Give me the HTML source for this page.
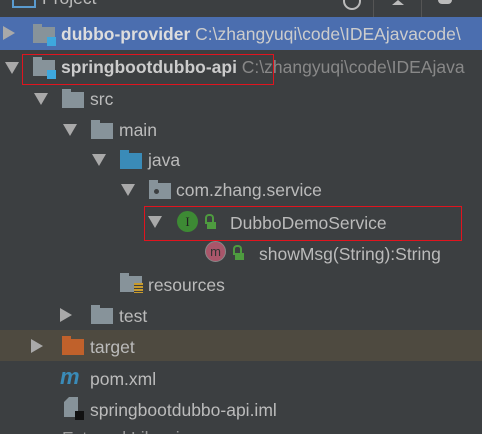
<!DOCTYPE html>
<html style="overflow:hidden;height:434px"><head><style>
body{margin:0;width:482px;height:434px;background:#3c3f41;overflow:hidden;font-family:"Liberation Sans",sans-serif;font-size:17.5px;color:#bbbbbb;position:relative}
.a{position:absolute}
.row{position:absolute;left:0;width:482px;height:31px}
.t{position:absolute;white-space:nowrap;line-height:20px}
.tri-d{position:absolute;width:0;height:0;border-left:7px solid transparent;border-right:7px solid transparent;border-top:12px solid #a9a9a9}
.tri-r{position:absolute;width:0;height:0;border-top:7px solid transparent;border-bottom:7px solid transparent;border-left:12px solid #a9a9a9}
.fold{position:absolute;width:22px;height:16px;background:#87939a}
.fold:before{content:"";position:absolute;left:0;top:-3px;width:9px;height:4px;background:inherit}
</style></head><body>
<div class="a" style="left:0;top:0;width:482px;height:17px;background:#3c3f41;border-bottom:1px solid #323232"></div>
<div class="a" style="left:12px;top:-6px;width:20px;height:10px;border:2px solid #5a9bcf"></div>
<div class="t" style="left:42px;top:-12px;color:#bbb">Project</div>
<div class="a" style="left:343px;top:-8px;width:14px;height:14px;border:2px solid #bbb;border-radius:50%"></div>
<div class="a" style="left:373px;top:0;width:1px;height:17px;background:#555"></div>
<div class="a" style="left:392px;top:0;width:0;height:0;border-left:6px solid transparent;border-right:6px solid transparent;border-bottom:5px solid #bbb"></div>
<div class="a" style="left:421px;top:0;width:1px;height:17px;background:#555"></div>
<div class="a" style="left:438px;top:-6px;width:14px;height:10px;background:#bbb;border-radius:4px"></div>

<div class="row" style="top:17px;height:33px;background:#4b6eaf"></div>
<div class="tri-r" style="left:3px;top:26px"></div>
<div class="fold" style="left:33px;top:27px"></div><div class="a" style="left:47px;top:37px;width:9px;height:9px;background:#3ea8de"></div>
<div class="t" style="left:61px;top:24px;color:#ddd;font-weight:bold">dubbo-provider <span style="font-weight:normal;color:#ccc">C:\zhangyuqi\code\IDEAjavacode\</span></div>

<div class="tri-d" style="left:5px;top:62px"></div>
<div class="fold" style="left:33px;top:60px"></div><div class="a" style="left:47px;top:70px;width:9px;height:9px;background:#3ea8de"></div>
<div class="t" style="left:61px;top:57px;color:#ccc;font-weight:bold">springbootdubbo-api <span style="font-weight:normal;color:#888">C:\zhangyuqi\code\IDEAjava</span></div>
<div class="a" style="left:22px;top:54px;width:250px;height:29px;border:1.5px solid #e0141e"></div>

<div class="tri-d" style="left:34px;top:93px"></div>
<div class="fold" style="left:62px;top:92px"></div>
<div class="t" style="left:90px;top:89px">src</div>

<div class="tri-d" style="left:63px;top:124px"></div>
<div class="fold" style="left:91px;top:123px"></div>
<div class="t" style="left:119px;top:120px">main</div>

<div class="tri-d" style="left:92px;top:154px"></div>
<div class="fold" style="left:120px;top:153px;background:#3a8bb8"></div>
<div class="t" style="left:148px;top:150px">java</div>

<div class="tri-d" style="left:121px;top:184px"></div>
<div class="fold" style="left:149px;top:183px"></div><div class="a" style="left:154px;top:189px;width:5px;height:5px;border-radius:50%;background:#3c3f41"></div>
<div class="t" style="left:176px;top:180px">com.zhang.service</div>

<div class="tri-d" style="left:148px;top:216px"></div>
<div class="a" style="left:177px;top:211px;width:21px;height:21px;border-radius:50%;background:#3d8a34;color:#222;font-size:13px;text-align:center;line-height:21px;font-family:'Liberation Serif',serif">I</div>
<div class="a" style="left:207px;top:222px;width:9px;height:7px;background:#4e9b3f"></div><div class="a" style="left:205px;top:214px;width:5px;height:8px;border:2px solid #4e9b3f;border-bottom:none;border-radius:4px 4px 0 0"></div>
<div class="t" style="left:230px;top:213px">DubboDemoService</div>
<div class="a" style="left:144px;top:206px;width:316px;height:33px;border:1.5px solid #e0141e"></div>

<div class="a" style="left:205px;top:241px;width:21px;height:21px;border-radius:50%;background:#a9566a;border:1px solid #888;color:#333;font-size:13px;text-align:center;line-height:19px;box-sizing:border-box">m</div>
<div class="a" style="left:235px;top:253px;width:9px;height:7px;background:#4e9b3f"></div><div class="a" style="left:233px;top:245px;width:5px;height:8px;border:2px solid #4e9b3f;border-bottom:none;border-radius:4px 4px 0 0"></div>
<div class="t" style="left:259px;top:244px">showMsg(String):String</div>

<div class="fold" style="left:120px;top:276px"></div>
<div class="a" style="left:134px;top:283px;width:9px;height:10px;background:repeating-linear-gradient(#c89b2d 0 2px,#3c3f41 2px 3px)"></div>
<div class="t" style="left:148px;top:275px">resources</div>

<div class="tri-r" style="left:60px;top:308px"></div>
<div class="fold" style="left:91px;top:308px"></div>
<div class="t" style="left:119px;top:306px">test</div>

<div class="row" style="top:330px;background:#4e4a40"></div>
<div class="tri-r" style="left:31px;top:339px"></div>
<div class="fold" style="left:62px;top:339px;background:#c0612b"></div>
<div class="t" style="left:90px;top:337px">target</div>

<div class="t" style="left:60px;top:367px;color:#3a8bb8;font-weight:bold;font-style:italic;font-size:22px">m</div>
<div class="t" style="left:90px;top:369px">pom.xml</div>

<div class="a" style="left:64px;top:397px;width:14px;height:20px;background:#87939a;clip-path:polygon(5px 0,100% 0,100% 100%,0 100%,0 5px)"></div>
<div class="a" style="left:75px;top:411px;width:9px;height:9px;background:#111"></div>
<div class="t" style="left:90px;top:400px">springbootdubbo-api.iml</div>
<div class="a" style="left:0;top:428px;width:482px;height:6px;overflow:hidden"><div class="t" style="left:62px;top:0;color:#999">External Libraries</div></div>
</body></html>
